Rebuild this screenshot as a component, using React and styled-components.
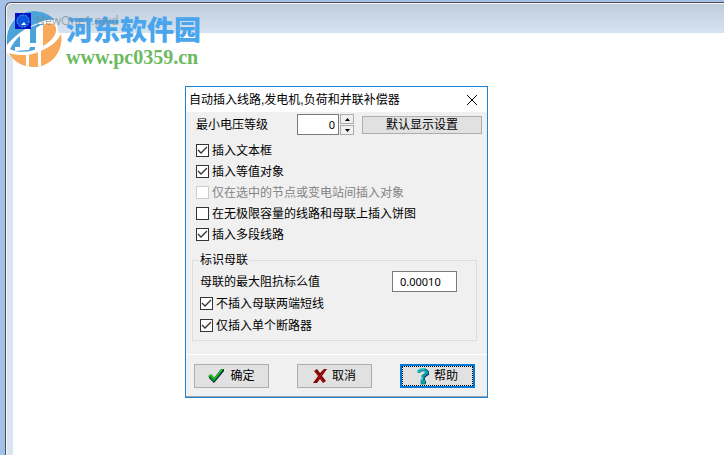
import React, { useState } from "react";
import styled, { createGlobalStyle } from "styled-components";

const OPTIONS = [
  { id: "textbox", label: "插入文本框", checked: true },
  { id: "equiv", label: "插入等值对象", checked: true },
  {
    id: "selected",
    label: "仅在选中的节点或变电站间插入对象",
    checked: false,
    disabled: true,
  },
  { id: "pie", label: "在无极限容量的线路和母联上插入饼图", checked: false },
  { id: "multi", label: "插入多段线路", checked: true },
];

const BUS_OPTIONS = [
  { id: "stubs", label: "不插入母联两端短线", checked: true },
  { id: "breaker", label: "仅插入单个断路器", checked: true },
];

function Option({ id, label, checked, disabled }) {
  const [on, setOn] = useState(checked);
  return (
    <OptionRow $disabled={disabled}>
      <Tick
        id={id}
        type="checkbox"
        checked={on}
        disabled={disabled}
        onChange={() => setOn(!on)}
      />
      <label htmlFor={id}>{label}</label>
    </OptionRow>
  );
}

function SiteMark() {
  return (
    <Mark>
      <svg width="56" height="56" viewBox="0 0 56 56" aria-hidden="true">
        <path
          d="M0 36C-2 14 12 0 28 0c9 0 17 4 22 11l4 16c-1 11-15 20-29 22C13 50 4 47 0 40z"
          fill="#fff"
        />
        <path
          d="M1 34C-1 14 12 0 28 0c9 0 16 4 21 9-7-1-12 0-17 3C19 17 8 25 1 34z"
          fill="#4ba3d9"
        />
        <path d="M4 38C9 28 19 18 32 13l5 0v22c-10 6-24 8-33 3z" fill="#4ba3d9" />
        <path d="M10 26l10-8h4v14h6V17l5-3h2v23l-8 3v-4h-5l-1 3-14 1v-4h5V25z" fill="#fff" />
        <path
          d="M37 14c8-4 14-1 13 6-1 6-6 11-13 15z"
          fill="#f8a959"
        />
        <path
          d="M55 23c3 17-10 33-27 33C16 56 7 50 3 42c12 4 26 2 36-4 8-4 13-9 16-15z"
          fill="#f8a959"
        />
        <path d="M20 42h3v14l-3-1zM32 39h3v16l-3 1z" fill="#fff" />
      </svg>
      <div>
        <MarkName>河东软件园</MarkName>
        <MarkUrl>www.pc0359.cn</MarkUrl>
      </div>
    </Mark>
  );
}

function App() {
  const [level, setLevel] = useState(0);
  return (
    <Desktop>
      <GlobalStyle />
      <Window>
        <WindowBar>
          <svg width="16" height="16" viewBox="0 0 16 16" aria-hidden="true">
            <path d="M0 0h16v16H0z" fill="#0713c9" />
            <circle cx="8" cy="8" r="6" fill="#0755dc" stroke="#57bce8" strokeDasharray="2 1" />
            <path d="M6 12l3-3 2 3z" fill="#fff" />
          </svg>
          <span>NewOne1.pwd</span>
        </WindowBar>
        <Client>
          <Dialog role="dialog" aria-labelledby="dialog-title">
            <TitleBar>
              <h1 id="dialog-title">自动插入线路,发电机,负荷和并联补偿器</h1>
              <Close type="button" aria-label="关闭">
                <svg width="10" height="10" viewBox="0 0 10 10">
                  <path d="M0 0l10 10M10 0L0 10" stroke="#000" fill="none" />
                </svg>
              </Close>
            </TitleBar>
            <Body>
              <LevelRow>
                <label htmlFor="level">最小电压等级</label>
                <Field
                  id="level"
                  $width={42}
                  $align="right"
                  value={level}
                  onChange={(e) => setLevel(Number(e.target.value) || 0)}
                />
                <Spinner>
                  <button type="button" aria-label="增加" onClick={() => setLevel(level + 1)}>
                    <svg width="5" height="3" viewBox="0 0 5 3">
                      <path d="M0 3L2.500 0L5 3z" />
                    </svg>
                  </button>
                  <button
                    type="button"
                    aria-label="减少"
                    onClick={() => setLevel(Math.max(0, level - 1))}
                  >
                    <svg width="5" height="3" viewBox="0 0 5 3">
                      <path d="M0 0L2.500 3L5 0z" />
                    </svg>
                  </button>
                </Spinner>
                <DefaultsButton type="button">默认显示设置</DefaultsButton>
              </LevelRow>
              <OptionList>
                {OPTIONS.map((option) => (
                  <Option key={option.id} {...option} />
                ))}
              </OptionList>
              <Group>
                <legend>标识母联</legend>
                <ImpedanceRow>
                  <label htmlFor="impedance">母联的最大阻抗标么值</label>
                  <Field id="impedance" $width={65} defaultValue="0.00010" />
                </ImpedanceRow>
                <BusOptions>
                  {BUS_OPTIONS.map((option) => (
                    <Option key={option.id} {...option} />
                  ))}
                </BusOptions>
              </Group>
            </Body>
            <Footer>
              <ActionButton type="button">
                <svg width="17" height="16" viewBox="0 0 17 16" aria-hidden="true">
                  <path d="M1 9l3-2 2 3 7-8 3-1v2L6 15 1 10z" fill="#000a50" />
                  <path d="M0 8l3-2 3 4 7-9h3L6 14z" fill="#0a9a14" />
                  <path d="M1 8l2-1 3 4 8-9" stroke="#2bd02f" fill="none" />
                </svg>
                确定
              </ActionButton>
              <ActionButton type="button">
                <svg width="14" height="16" viewBox="0 0 14 16" aria-hidden="true">
                  <path d="M1 3l3-2 3 4 4-4h3L9 8l4 5-3 2-3-4-3 4H0l5-7z" fill="#7d0404" />
                  <path d="M2 3l9 11M12 2L2 14" stroke="#c00b0b" fill="none" />
                </svg>
                取消
              </ActionButton>
              <ActionButton type="button" $focused>
                <svg width="12" height="17" viewBox="0 0 12 17" aria-hidden="true">
                  <path
                    d="M2 5V3l3-1h4l2 2v2L7 9v3M6 14h2v2"
                    stroke="#000a50"
                    strokeWidth="2"
                    fill="none"
                  />
                  <path
                    d="M2 5V3l2-1h4l2 2v1L6 8v3M5 13h2v2H5z"
                    stroke="#0d9aa3"
                    strokeWidth="3"
                    fill="none"
                  />
                  <path d="M1 4l2-3h4M5 9v2" stroke="#35e6ea" fill="none" />
                </svg>
                帮助
              </ActionButton>
            </Footer>
          </Dialog>
        </Client>
      </Window>
      <SiteMark />
    </Desktop>
  );
}

const GlobalStyle = createGlobalStyle`
  * {
    box-sizing: border-box;
  }
  body {
    margin: 0;
    color: #000;
    font-family: "Liberation Sans", "Noto Sans CJK SC", sans-serif;
    font-size: 12px;
    line-height: 16px;
  }
  button, input {
    margin: 0;
    padding: 0;
    font: inherit;
    color: inherit;
  }
`;

const Desktop = styled.main`
  position: relative;
  display: flex;
  min-height: 100vh;
  padding: 2px 0 0 5px;
  overflow: hidden;
  background: #a3c1e8;
`;

const Window = styled.section`
  display: flex;
  flex: 1;
  flex-direction: column;
  border: solid #4c4c52;
  border-width: 1px 0 0 1px;
  border-top-left-radius: 6px;
  background: #d9e5f2;
  box-shadow: inset 1px 1px 0 #f4f6fa;
`;

const WindowBar = styled.header`
  display: flex;
  align-items: center;
  gap: 5px;
  height: 29px;
  margin: 1px 0 0 1px;
  padding: 5px 8px 0;
  border-top-left-radius: 5px;
  background: linear-gradient(#bfccd9, #d6e4f2);
  svg,
  span {
    position: relative;
    z-index: 2;
  }
  span {
    color: #7c868fb0;
    font-family: "Open Sans", sans-serif;
    font-size: 12px;
  }
`;

const Client = styled.div`
  position: relative;
  flex: 1;
  margin-left: 7px;
  background: #fff;
`;

const Dialog = styled.section`
  position: absolute;
  top: 53px;
  left: 172px;
  width: 303px;
  border: 1px solid #1883d7;
  background: #f0f0f0;
`;

const TitleBar = styled.header`
  display: flex;
  align-items: center;
  justify-content: space-between;
  height: 25px;
  padding: 0 10px 0 3px;
  background: #fff;
  h1 {
    margin: 0;
    font-size: 12px;
    font-weight: normal;
  }
`;

const Close = styled.button`
  display: flex;
  border: 0;
  background: none;
`;

const Body = styled.div`
  padding: 2px 5px 13px 10px;
`;

const LevelRow = styled.div`
  display: flex;
  align-items: center;
  height: 21px;
  label {
    flex: 1;
  }
`;

const Field = styled.input`
  width: ${({ $width }) => $width}px;
  height: 21px;
  padding: 0 ${({ $align }) => ($align ? 3 : 7)}px;
  border: 1px solid #7a7a7a;
  background: #fff;
  font-family: "Noto Sans", sans-serif;
  font-size: 11px;
  text-align: ${({ $align }) => $align || "left"};
`;

const Spinner = styled.div`
  display: flex;
  flex-direction: column;
  gap: 1px;
  margin: 0 8px 0 1px;
  button {
    display: flex;
    align-items: center;
    justify-content: center;
    width: 14px;
    height: 10px;
    border: 1px solid #acacac;
    background: #f0f0f0;
  }
`;

const DefaultsButton = styled.button`
  width: 120px;
  height: 18px;
  border: 1px solid #adadad;
  background: #e1e1e1;
  line-height: 16px;
`;

const OptionList = styled.div`
  padding-top: 5px;
`;

const OptionRow = styled.div`
  display: flex;
  align-items: center;
  gap: 3px;
  height: 21px;
  color: ${({ $disabled }) => ($disabled ? "#838383" : "#000")};
`;

const CHECK = `url("data:image/svg+xml,%3Csvg xmlns='http://www.w3.org/2000/svg' viewBox='0 0 11 11'%3E%3Cpath d='M1 5l3 3 6-6' fill='none' stroke='%23333' stroke-width='1.3'/%3E%3C/svg%3E")`;

const Tick = styled.input`
  flex: none;
  width: 13px;
  height: 13px;
  appearance: none;
  border: 1px solid #333;
  background: #fff;
  &:checked {
    background: #fff ${CHECK} center / 11px no-repeat;
  }
  &:disabled {
    border-color: #ccc;
  }
`;

const Group = styled.fieldset`
  min-width: 0;
  margin: 7px 5px 0 -4px;
  padding: 3px 19px 4px 7px;
  border: 1px solid #dcdcdc;
  legend {
    padding: 0 1px;
    margin-left: -1px;
  }
`;

const ImpedanceRow = styled.div`
  display: flex;
  align-items: center;
  justify-content: space-between;
  margin-bottom: 1px;
`;

const BusOptions = styled.div`
  display: flex;
  flex-direction: column;
  gap: 1px;
`;

const Footer = styled.footer`
  display: flex;
  justify-content: space-between;
  padding: 9px 12px 8px 8px;
  border-top: 1px solid #fff;
  border-bottom: 1px solid #a0a0a0;
`;

const ActionButton = styled.button`
  display: flex;
  align-items: center;
  justify-content: center;
  gap: 5px;
  width: 75px;
  height: 24px;
  border: ${({ $focused }) => ($focused ? "2px solid #0078d7" : "1px solid #adadad")};
  outline: ${({ $focused }) => ($focused ? "1px dotted #000" : "none")};
  outline-offset: -3px;
  background: #e1e1e1;
`;

/* Site badge floating over the window corner */
const Mark = styled.div`
  position: absolute;
  top: 11px;
  left: 6px;
  display: flex;
  gap: 4px;
  pointer-events: none;
`;

const MarkName = styled.div`
  color: #4aa5ec;
  font-family: "Noto Sans CJK SC", sans-serif;
  font-size: 27px;
  font-weight: 900;
  line-height: 36px;
`;

const MarkUrl = styled.div`
  color: #6cba5f;
  font-family: "Liberation Serif", serif;
  font-size: 20px;
  font-weight: bold;
  line-height: 20px;
`;

export default App;
